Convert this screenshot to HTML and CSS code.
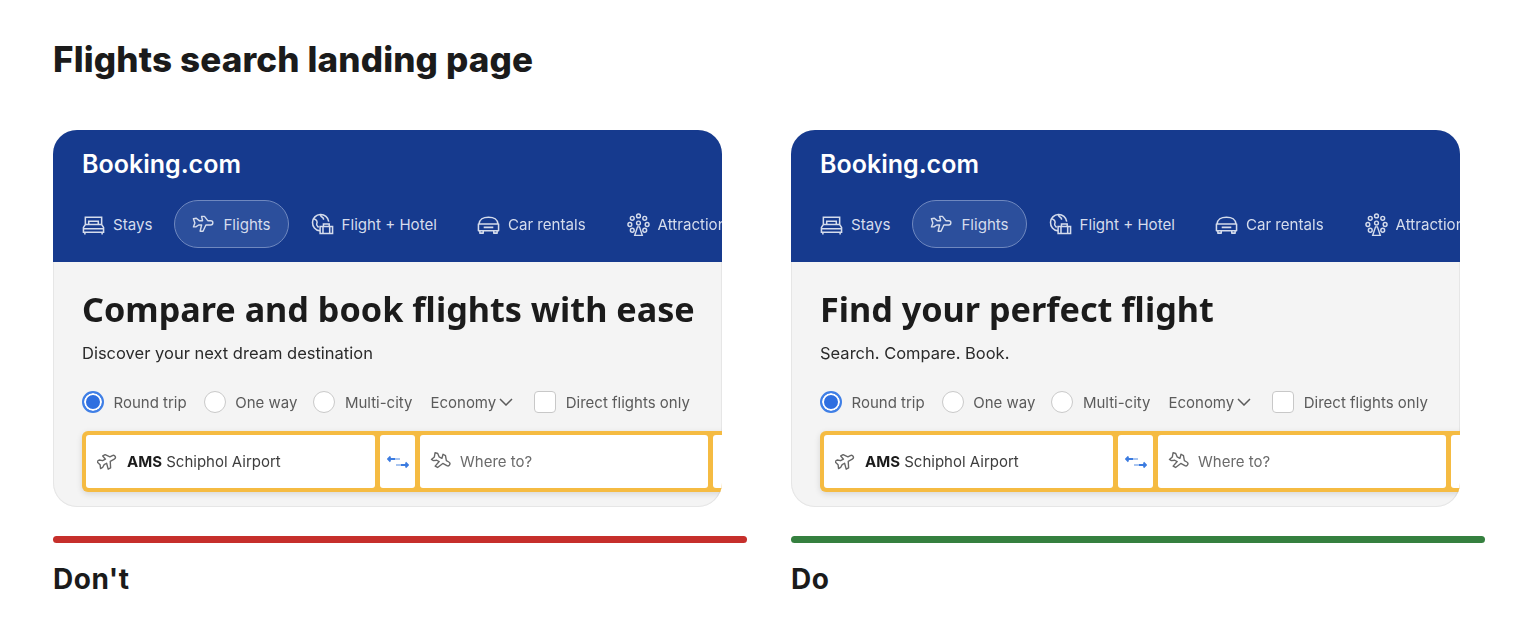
FILE: index.html
```html
<!DOCTYPE html>
<html lang="en">
<head>
  <meta charset="UTF-8" />
  <title>Flights search landing page</title>
  <link rel="stylesheet" href="styles.css">
</head>
<body>
  <svg class="sprites" width="0" height="0" aria-hidden="true">
    <symbol id="i-bed" viewBox="0 0 24 24"><path d="M3 20v2.500M21 20v2.500M1.500 20v-5l2-3h17l2 3v5zM3.500 12V4.500h17V12M7 12V8.500h10V12M1.500 16.500h21" fill="none" stroke="currentColor" stroke-width="1.600"/></symbol>
    <symbol id="i-plane" viewBox="0 0 24 24"><path id="plane-shape" d="M1.500 6l3-.5 3 2.500h3.500l-1-4.500h3l3.500 4.500h3c3 0 3 4.500 0 4.500h-5l-3 6.500h-3l1.500-6.500H7l-3 2H1.500l1.500-4z" fill="none" stroke="currentColor" stroke-width="1.500" stroke-linejoin="round"/></symbol>
    <symbol id="i-depart" viewBox="0 0 24 24"><use href="#plane-shape" transform="rotate(-28 12 12)"/></symbol>
    <symbol id="i-dest" viewBox="0 0 24 24"><use href="#plane-shape" transform="rotate(28 12 12)"/></symbol>
    <symbol id="i-combo" viewBox="0 0 24 24"><path d="M9 18.500A8.500 8.500 0 1 1 18.500 9M3 6c3 1 4 3 3 5s1 3 2 4M10 2c0 3 4 2 3 5M9.500 14h13v7.500h-13zM13 14v-2.500h6V14M12.500 14v7.500M19.500 14v7.500" fill="none" stroke="currentColor" stroke-width="1.600"/></symbol>
    <symbol id="i-car" viewBox="0 0 24 24"><path d="M2 11.500C3 6 6 4.500 12 4.500S21 6 22 11.500M1.500 11.500h21v7h-21zM3 18.500v2.500h3.500v-2.500M17.500 18.500v2.500H21v-2.500M7 15h10" fill="none" stroke="currentColor" stroke-width="1.600" stroke-linejoin="round"/></symbol>
    <symbol id="i-wheel" viewBox="0 0 24 24"><g fill="none" stroke="currentColor" stroke-width="1.500"><circle cx="12" cy="3" r="2"/><circle cx="5.500" cy="5.500" r="2"/><circle cx="18.500" cy="5.500" r="2"/><circle cx="3" cy="12" r="2"/><circle cx="21" cy="12" r="2"/><circle cx="5.500" cy="18" r="2"/><circle cx="18.500" cy="18" r="2"/><circle cx="12" cy="10.500" r="2"/><path d="M8 23.500l3-9h2l3 9z"/></g></symbol>
    <symbol id="i-swap" viewBox="0 0 22 12"><path d="M8 3H1M3.500.5L1 3l2.500 2.500M14 9h7M18.500 6.500L21 9l-2.500 2.500" fill="none" stroke="#3b7be0" stroke-width="1.800"/><path d="M8 3h5M9 9h5" stroke="#a9c5f0" stroke-width="1.800"/></symbol>
  </svg>

  <h1 class="page-title">Flights search landing page</h1>

  <div class="compare">
    <div class="column">
      <div class="card">
        <header class="card-head">
          <div class="logo">Booking.com</div>
          <nav class="nav">
            <a class="nav-item"><svg class="nav-icon"><use href="#i-bed"/></svg>Stays</a>
            <a class="nav-item active"><svg class="nav-icon"><use href="#i-plane"/></svg>Flights</a>
            <a class="nav-item"><svg class="nav-icon"><use href="#i-combo"/></svg>Flight + Hotel</a>
            <a class="nav-item"><svg class="nav-icon"><use href="#i-car"/></svg>Car rentals</a>
            <a class="nav-item"><svg class="nav-icon"><use href="#i-wheel"/></svg>Attractions</a>
          </nav>
        </header>
        <div class="card-body">
          <h2 class="headline">Compare and book flights with ease</h2>
          <p class="subline">Discover your next dream destination</p>
          <div class="options">
            <label class="option"><span class="radio checked"></span>Round trip</label>
            <label class="option"><span class="radio"></span>One way</label>
            <label class="option"><span class="radio"></span>Multi-city</label>
            <span class="cabin">Economy<svg class="chevron" viewBox="0 0 14 8"><path d="M1 1l6 6 6-6" fill="none" stroke="currentColor" stroke-width="1.500"/></svg></span>
            <label class="option"><span class="checkbox"></span>Direct flights only</label>
          </div>
          <div class="search">
            <div class="field from"><svg class="field-icon"><use href="#i-depart"/></svg><span><b>AMS</b> Schiphol Airport</span></div>
            <div class="field swap"><svg class="swap-icon"><use href="#i-swap"/></svg></div>
            <div class="field to"><svg class="field-icon"><use href="#i-dest"/></svg><span>Where to?</span></div>
            <div class="field rest"></div>
          </div>
        </div>
      </div>
      <div class="rule bad"></div>
      <div class="verdict">Don't</div>
    </div>

    <div class="column">
      <div class="card">
        <header class="card-head">
          <div class="logo">Booking.com</div>
          <nav class="nav">
            <a class="nav-item"><svg class="nav-icon"><use href="#i-bed"/></svg>Stays</a>
            <a class="nav-item active"><svg class="nav-icon"><use href="#i-plane"/></svg>Flights</a>
            <a class="nav-item"><svg class="nav-icon"><use href="#i-combo"/></svg>Flight + Hotel</a>
            <a class="nav-item"><svg class="nav-icon"><use href="#i-car"/></svg>Car rentals</a>
            <a class="nav-item"><svg class="nav-icon"><use href="#i-wheel"/></svg>Attractions</a>
          </nav>
        </header>
        <div class="card-body">
          <h2 class="headline">Find your perfect flight</h2>
          <p class="subline">Search. Compare. Book.</p>
          <div class="options">
            <label class="option"><span class="radio checked"></span>Round trip</label>
            <label class="option"><span class="radio"></span>One way</label>
            <label class="option"><span class="radio"></span>Multi-city</label>
            <span class="cabin">Economy<svg class="chevron" viewBox="0 0 14 8"><path d="M1 1l6 6 6-6" fill="none" stroke="currentColor" stroke-width="1.500"/></svg></span>
            <label class="option"><span class="checkbox"></span>Direct flights only</label>
          </div>
          <div class="search">
            <div class="field from"><svg class="field-icon"><use href="#i-depart"/></svg><span><b>AMS</b> Schiphol Airport</span></div>
            <div class="field swap"><svg class="swap-icon"><use href="#i-swap"/></svg></div>
            <div class="field to"><svg class="field-icon"><use href="#i-dest"/></svg><span>Where to?</span></div>
            <div class="field rest"></div>
          </div>
        </div>
      </div>
      <div class="rule good"></div>
      <div class="verdict">Do</div>
    </div>
  </div>
</body>
</html>
```

FILE: styles.css
```css
body {
  margin: 0;
  padding: 0 51px 0 53px;
  background-color: #fff;
  color: #1b1b1b;
  font-family: 'Inter', sans-serif;
  overflow: hidden;
}

.sprites {
  position: absolute;
}

.page-title {
  margin: 0;
  padding-top: 38px;
  font-size: 35px;
  line-height: 42px;
  font-weight: 800;
  letter-spacing: 0.150px;
}

.compare {
  display: grid;
  grid-template-columns: 694px 694px;
  gap: 44px;
  margin-top: 50px;
}

.card {
  width: 669px;
  height: 377px;
  box-sizing: border-box;
  border-radius: 24px;
  overflow: hidden;
  background-color: #f4f4f4;
  box-shadow: inset 0 0 0 1px #e6e6e6;
  filter: blur(0.45px);
}

.card-head {
  height: 132px;
  box-sizing: border-box;
  padding: 17px 0 0 29px;
  background-color: #163a8e;
  color: #fff;
}

.logo {
  font-size: 25px;
  line-height: 34px;
  font-weight: 600;
  letter-spacing: 0;
}

.nav {
  display: flex;
  align-items: center;
  margin-top: 19px;
  white-space: nowrap;
}

.nav-item {
  display: flex;
  align-items: center;
  gap: 8px;
  height: 48px;
  box-sizing: border-box;
  margin-right: 22px;
  font-size: 15.100px;
  color: #d5dcec;
}

.nav-item.active {
  padding: 0 17px;
  border: 1px solid #6f88bf;
  border-radius: 24px;
  background-color: #2c4f9c;
}

.nav-item:nth-child(3) {
  margin-right: 40px;
}

.nav-item:nth-child(4) {
  margin-right: 41px;
}

.nav-icon {
  width: 23px;
  height: 23px;
  flex: none;
}

.card-body {
  padding: 0 0 0 29px;
}

.headline {
  margin: 0;
  padding-top: 26px;
  font-family: 'Noto Sans', sans-serif;
  font-size: 34.200px;
  line-height: 42px;
  font-weight: 700;
  white-space: nowrap;
}

.subline {
  margin: 12px 0 0;
  font-size: 16.500px;
  line-height: 22px;
  color: #2a2a2a;
}

.options {
  display: flex;
  align-items: center;
  height: 24px;
  margin-top: 26px;
  font-size: 15px;
  color: #5b5b5b;
  white-space: nowrap;
}

.option {
  display: flex;
  align-items: center;
  gap: 9.500px;
  margin-right: 16px;
}

.option:nth-child(1) {
  margin-right: 17px;
}

.option:nth-child(3) {
  margin-right: 18px;
}

.radio, .checkbox {
  width: 22px;
  height: 22px;
  box-sizing: border-box;
  border: 1px solid #c8c8c8;
  background-color: #fff;
}

.radio {
  border-radius: 50%;
}

.radio.checked {
  border: 2px solid #3f7fe6;
  box-shadow: inset 0 0 0 2px #fff;
  background-color: #2f6fe0;
}

.checkbox {
  border-radius: 4px;
}

.cabin {
  display: flex;
  align-items: center;
  gap: 3px;
  margin-right: 21px;
}

.chevron {
  width: 14px;
  height: 8px;
}

.search {
  display: flex;
  gap: 5px;
  width: 700px;
  height: 61px;
  box-sizing: border-box;
  margin-top: 17px;
  padding: 4px;
  border-radius: 6px;
  background-color: #f5bb42;
  box-shadow: 0 2px 6px rgba(0, 0, 0, 0.12);
}

.field {
  display: flex;
  align-items: center;
  gap: 8px;
  box-sizing: border-box;
  border-radius: 3px;
  background-color: #fff;
  font-size: 15px;
  color: #3d3d3d;
}

.field.from {
  width: 289px;
  padding-left: 11px;
}

.field.swap {
  width: 35px;
  justify-content: center;
}

.field.to {
  width: 288px;
  padding-left: 10px;
  color: #6b6b6b;
}

.field.rest {
  flex: 1;
}

.field b {
  color: #1b1b1b;
}

.field-icon {
  width: 22px;
  height: 22px;
  flex: none;
  color: #666;
}

.swap-icon {
  width: 22px;
  height: 12px;
}

.rule {
  height: 7px;
  margin-top: 29px;
  border-radius: 4px;
}

.rule.bad {
  background-color: #c62f2b;
}

.rule.good {
  background-color: #35803f;
}

.verdict {
  margin-top: 20px;
  font-size: 28px;
  line-height: 32px;
  font-weight: 700;
  letter-spacing: 0.500px;
}
```
